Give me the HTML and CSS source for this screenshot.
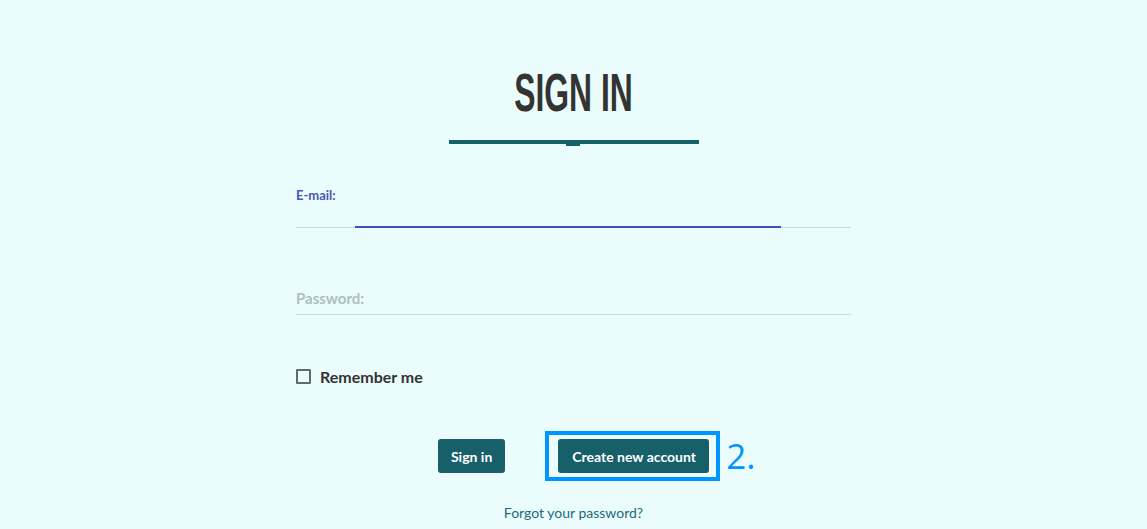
FILE: index.html
```html
<!DOCTYPE html>
<html>
<head>
<meta charset="utf-8">
<link rel="stylesheet" href="styles.css">
</head>
<body>
<main class="page">
  <h1 class="title"><span class="title-text">SIGN IN</span></h1>
  <div class="title-rule"><span class="notch"></span></div>
  <form class="form">
    <div class="field field-focus">
      <label class="label label-focus">E-mail:</label>
      <div class="line"><span class="line-active"></span></div>
    </div>
    <div class="field field-pass">
      <label class="label label-idle">Password:</label>
      <div class="line"></div>
    </div>
    <label class="remember"><span class="box"></span>Remember me</label>
    <div class="actions">
      <button type="button" class="btn btn-sign">Sign in</button>
      <span class="highlight">
        <button type="button" class="btn btn-create">Create new account</button>
        <span class="mark">2.</span>
      </span>
    </div>
    <a class="forgot" href="#">Forgot your password?</a>
  </form>
</main>
</body>
</html>
```
FILE: styles.css
```css
html, body {
  margin: 0;
  padding: 0;
  background: #ebfcfc;
}
body {
  font-family: Lato, "Open Sans", sans-serif;
  color: #333;
}
.page {
  display: flex;
  flex-direction: column;
  align-items: center;
  padding-top: 62px;
}
.title {
  margin: 0;
  height: 60px;
  display: flex;
  justify-content: center;
  align-items: center;
}
.title-text {
  display: inline-block;
  font-family: "Liberation Sans Narrow", "Liberation Sans", sans-serif;
  font-weight: bold;
  font-size: 54px;
  color: #333;
  transform: scaleX(0.59);
  letter-spacing: 0;
}
.title-rule {
  position: relative;
  margin-top: 18px;
  width: 250px;
  height: 4px;
  background: #17606a;
}
.notch {
  position: absolute;
  left: 117px;
  top: 4px;
  width: 14px;
  height: 2px;
  background: #17606a;
}
.form {
  width: 555px;
  display: flex;
  flex-direction: column;
  margin-top: 43px;
}
.field {
  display: flex;
  flex-direction: column;
}
.label {
  font-weight: bold;
}
.label-focus {
  font-size: 13px;
  color: #4a56b5;
  line-height: 16px;
}
.line {
  position: relative;
  height: 1px;
  background: #c9dcdc;
}
.field-focus .line {
  margin-top: 24px;
}
.line-active {
  position: absolute;
  left: 59px;
  width: 426px;
  top: -1px;
  height: 2px;
  background: #3f51b5;
}
.field-pass {
  margin-top: 61px;
}
.label-idle {
  font-size: 15px;
  color: #aebfc2;
  line-height: 18px;
}
.field-pass .line {
  margin-top: 7px;
}
.remember {
  display: flex;
  align-items: center;
  margin-top: 52px;
  font-weight: bold;
  font-size: 16px;
  color: #333;
}
.box {
  width: 11px;
  height: 11px;
  border: 2px solid #5f6b6d;
  border-radius: 1px;
  margin: 0 9px 0 0;
}
.actions {
  display: flex;
  justify-content: center;
  align-items: center;
  gap: 53px;
  margin-top: 53px;
}
.btn {
  font-family: Lato, sans-serif;
  font-weight: bold;
  font-size: 14px;
  color: #fff;
  background: #17606a;
  border: none;
  border-radius: 3px;
  height: 34px;
}
.btn-sign {
  padding: 0 13px;
}
.btn-create {
  padding: 0 13px 0 14px;
}
.highlight {
  position: relative;
  display: flex;
}
.highlight::before {
  content: "";
  position: absolute;
  left: -13px;
  right: -11px;
  top: -8px;
  bottom: -8px;
  border: 4px solid #0096ff;
}
.mark {
  position: absolute;
  left: 168px;
  top: -3px;
  font-family: "Open Sans", sans-serif;
  font-size: 35px;
  line-height: 40px;
  color: #0096ff;
}
.forgot {
  align-self: center;
  margin-top: 31px;
  font-size: 14px;
  color: #1b6b80;
  text-decoration: none;
}
```
